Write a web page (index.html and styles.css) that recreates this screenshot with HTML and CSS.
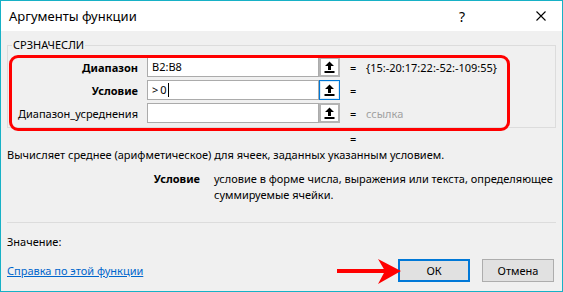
FILE: index.html
```html
<!DOCTYPE html>
<html lang="ru">
<head>
<meta charset="utf-8">
<title>Аргументы функции</title>
<link rel="stylesheet" href="styles.css">
</head>
<body>
<div class="window">
  <div class="titlebar">
    <span class="title">Аргументы функции</span>
    <span class="tb-btn help">?</span>
    <span class="tb-btn close">
      <svg width="10" height="10" viewBox="0 0 10 10"><path d="M0.5 0.5 L9.5 9.5 M9.5 0.5 L0.5 9.5" stroke="#000" stroke-width="1.1" fill="none"/></svg>
    </span>
  </div>
  <div class="content">
    <fieldset class="group">
      <legend>СРЗНАЧЕСЛИ</legend>
      <div class="row">
        <span class="lbl bold">Диапазон</span>
        <span class="field">B2:B8</span>
        <span class="ref"><svg width="11" height="12" viewBox="0 0 11 12"><path d="M5.5 0.5 L10 5 L7 5 L7 9 L4 9 L4 5 L1 5 Z" fill="#000"/><rect x="0.5" y="10" width="10" height="2" fill="#000"/></svg></span>
        <span class="eq">=</span>
        <span class="val">{15:-20:17:22:-52:-109:55}</span>
      </div>
      <div class="row">
        <span class="lbl bold">Условие</span>
        <span class="field"><span class="gt">&gt;</span>0<span class="caret"></span></span>
        <span class="ref focus"><svg width="11" height="12" viewBox="0 0 11 12"><path d="M5.5 0.5 L10 5 L7 5 L7 9 L4 9 L4 5 L1 5 Z" fill="#000"/><rect x="0.5" y="10" width="10" height="2" fill="#000"/></svg></span>
        <span class="eq">=</span>
        <span class="val"></span>
      </div>
      <div class="row">
        <span class="lbl">Диапазон_усреднения</span>
        <span class="field"></span>
        <span class="ref"><svg width="11" height="12" viewBox="0 0 11 12"><path d="M5.5 0.5 L10 5 L7 5 L7 9 L4 9 L4 5 L1 5 Z" fill="#000"/><rect x="0.5" y="10" width="10" height="2" fill="#000"/></svg></span>
        <span class="eq">=</span>
        <span class="val muted">ссылка</span>
      </div>
    </fieldset>
    <div class="highlight"></div>
    <div class="result-eq">=</div>
    <p class="desc">Вычисляет среднее (арифметическое) для ячеек, заданных указанным условием.</p>
    <div class="argdesc">
      <span class="arg-name">Условие</span>
      <span class="arg-text">условие в форме числа, выражения или текста, определяющее суммируемые ячейки.</span>
    </div>
    <div class="sep"></div>
    <div class="value">Значение:</div>
    <div class="footer">
      <a class="help-link" href="#">Справка по этой функции</a>
      <div class="buttons">
        <button class="btn ok">ОК</button>
        <button class="btn">Отмена</button>
      </div>
    </div>
    <svg class="arrow" width="70" height="32" viewBox="0 0 70 32">
      <rect x="2" y="13" width="50" height="4" fill="#ff0000"/>
      <path d="M66 15 L43 3 L50 15 L43 28 Z" fill="#ff0000"/>
    </svg>
  </div>
</div>
</body>
</html>
```

FILE: styles.css
```css
* { box-sizing: border-box; }
html, body { margin: 0; padding: 0; }
body {
  width: 563px;
  height: 292px;
  font-family: "Noto Sans", "Open Sans", sans-serif;
  font-size: 11px;
  color: #000;
  background: #f0f0f0;
}
.window {
  width: 563px;
  height: 292px;
  border: 1px solid #17b1c6;
  background: #f0f0f0;
  display: flex;
  flex-direction: column;
}
.titlebar {
  height: 30px;
  background: #fff;
  display: flex;
  align-items: center;
  flex: none;
}
.title {
  font-size: 13px;
  padding-left: 8px;
  flex: 1;
}
.tb-btn {
  height: 30px;
  display: flex;
  align-items: center;
  justify-content: center;
}
.help {
  font-size: 14px;
  width: 20px;
  margin-right: 48px;
}
.close { width: 42px; }
.content {
  position: relative;
  flex: 1;
  padding: 0 6px;
}
.group {
  margin: 7px 0 0 0;
  padding: 5px 0 4px 0;
  border: 1px solid #dcdcdc;
  min-width: 0;
}
.group legend {
  margin-left: 4px;
  padding: 0 1px;
  font-size: 11px;
  line-height: 14px;
}
.row {
  display: flex;
  align-items: center;
  height: 20px;
  margin-bottom: 3px;
}
.row:last-child { margin-bottom: 0; }
.lbl {
  width: 130px;
  margin-right: 9px;
  text-align: right;
  white-space: nowrap;
}
.bold { font-weight: bold; }
.field {
  width: 172px;
  height: 20px;
  background: #fff;
  border: 1px solid #ababab;
  padding-left: 4px;
  line-height: 18px;
  display: flex;
  align-items: center;
}
.gt { margin-right: 2px; }
.caret {
  display: inline-block;
  width: 1px;
  height: 14px;
  background: #000;
  margin-left: 1px;
}
.ref {
  width: 21px;
  height: 20px;
  background: #fff;
  border: 2px solid #b4b4b4;
  display: flex;
  align-items: center;
  justify-content: center;
}
.ref.focus {
  border: 1px solid #0078d7;
  box-shadow: inset 0 0 0 1px #d9ebf9;
}
.eq {
  width: 16px;
  margin-left: 10px;
}
.val { white-space: nowrap; }
.muted { color: #a0a0a0; }
.highlight {
  position: absolute;
  left: 8px;
  top: 24px;
  width: 501px;
  height: 76px;
  border: 3px solid #ff0000;
  border-radius: 9px;
}
.result-eq {
  margin-top: 3px;
  padding-left: 343px;
  line-height: 16px;
}
.desc {
  margin: 0;
  line-height: 16px;
}
.argdesc {
  margin-top: 8px;
  display: grid;
  grid-template-columns: 193px 1fr;
  column-gap: 14px;
  line-height: 16px;
}
.arg-name {
  font-weight: bold;
  text-align: right;
}
.sep {
  margin-top: 19px;
  height: 1px;
  background: #dcdcdc;
}
.value {
  margin-top: 11px;
  line-height: 16px;
}
.footer {
  margin-top: 9px;
  display: flex;
  align-items: baseline;
  justify-content: space-between;
  padding-right: 2px;
}
.help-link {
  color: #0066cc;
  text-decoration: underline;
  line-height: 16px;
}
.buttons {
  display: flex;
  gap: 12px;
}
.btn {
  width: 72px;
  height: 23px;
  font-family: inherit;
  font-size: 11px;
  background: #e1e1e1;
  border: 1px solid #adadad;
  padding: 0;
  color: #000;
}
.btn.ok {
  border: 2px solid #0078d7;
}
.arrow {
  position: absolute;
  left: 334px;
  top: 225px;
}
```
